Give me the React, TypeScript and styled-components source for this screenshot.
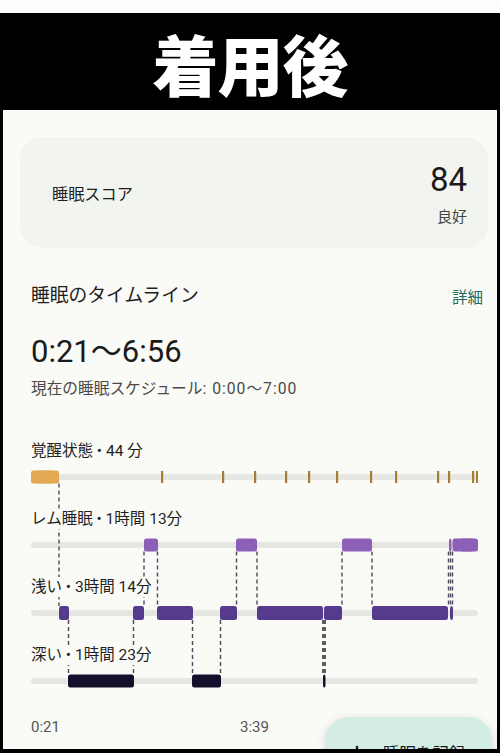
import React from "react";
import styled, { createGlobalStyle } from "styled-components";
import { Plus } from "lucide-react";

const GlobalStyle = createGlobalStyle`
  html, body {
    margin: 0;
    padding: 0;
    background: #fff;
  }

  body {
    width: 500px;
    height: 753px;
    overflow: hidden;
    font-family: Roboto, "Noto Sans CJK JP", sans-serif;
    color: #1f1f1f;
  }
`;

const CHART_W = 447;
const SCREEN_BG = "#fafaf6";

type Bar = [number, number];

interface Stage {
  label: string;
  color: string;
  bars: Bar[];
  ticks?: number[];
  roundLeft?: boolean;
  roundRight?: boolean;
  inset: number;
}

const stages: Stage[] = [
  {
    label: "覚醒状態 • 44 分",
    color: "#e2a954",
    bars: [[0, 28]],
    ticks: [131, 192, 224, 255, 278, 306, 340, 365, 407, 418, 442, 446],
    roundLeft: true,
    inset: 0.5,
  },
  {
    label: "レム睡眠 • 1時間 13分",
    color: "#8b60b6",
    bars: [
      [113, 127],
      [205, 226],
      [311, 341],
      [418, 420.5],
      [421.5, 447],
    ],
    roundRight: true,
    inset: 0.5,
  },
  {
    label: "浅い • 3時間 14分",
    color: "#563a8e",
    bars: [
      [28, 38],
      [102, 113],
      [126, 162],
      [189, 206],
      [226, 292],
      [293, 311],
      [341, 417],
      [419, 422],
    ],
    inset: 0,
  },
  {
    label: "深い • 1時間 23分",
    color: "#160f2c",
    bars: [
      [37, 103],
      [161, 190],
      [292, 294.5],
    ],
    inset: 0.5,
  },
];

// x, y1, y2, dark
const links: [number, number, number, boolean?][] = [
  [28, 42.5, 165],
  [37.5, 179, 233],
  [102.5, 179, 233],
  [113, 110.5, 165],
  [126.5, 110.5, 165],
  [161.5, 179, 233],
  [189.5, 179, 233],
  [205.5, 110.5, 165],
  [226, 110.5, 165],
  [292, 179, 233, true],
  [294, 179, 233, true],
  [311, 110.5, 165],
  [341, 110.5, 165],
  [417.5, 110.5, 165],
  [419.5, 110.5, 165],
  [421.5, 110.5, 165],
];

const Page = styled.div`
  width: 500px;
  height: 753px;
  display: flex;
  flex-direction: column;
`;

const TopStrip = styled.div`
  height: 13px;
  background: #fdfdfd;
`;

const Header = styled.div`
  height: 97px;
  background: #000;
  display: flex;
  align-items: center;
  justify-content: center;
`;

const Title = styled.h1`
  margin: 0;
  color: #fff;
  font-family: "Noto Sans CJK JP", sans-serif;
  font-weight: 900;
  font-size: 66px;
  line-height: 1;
  letter-spacing: -1px;
`;

const Screen = styled.div`
  position: relative;
  flex: 1;
  background: ${SCREEN_BG};
  border: 3px solid #000;
  border-top: 0;
  border-bottom-width: 4px;
  overflow: hidden;
  padding-top: 27px;
`;

const ScoreCard = styled.div`
  height: 111px;
  margin: 0 9px 0 17px;
  border-radius: 22px;
  background: #f2f4f0;
  padding: 0 21px 0 32px;
  display: flex;
  align-items: center;
  justify-content: space-between;
`;

const CardLabel = styled.span`
  font-size: 16.2px;
  color: #1f1f1f;
`;

const ScoreColumn = styled.div`
  display: flex;
  flex-direction: column;
  align-items: flex-end;
  gap: 8px;
  margin-top: 2px;
`;

const ScoreValue = styled.span`
  font-size: 33px;
  line-height: 38px;
  color: #1a1a1a;
`;

const ScoreNote = styled.span`
  font-size: 15px;
  line-height: 20px;
  color: #444;
`;

const Section = styled.section`
  padding: 0 14px 0 28px;
`;

const SectionHead = styled.div`
  margin-top: 36px;
  display: flex;
  align-items: center;
  justify-content: space-between;
`;

const SectionTitle = styled.h2`
  margin: 0;
  font-size: 18.8px;
  line-height: 24px;
  font-weight: 400;
  color: #1f1f1f;
`;

const LinkText = styled.span`
  font-size: 15.5px;
  color: #1f6b5e;
`;

const Range = styled.div`
  margin-top: 25px;
  font-size: 31px;
  line-height: 38px;
  color: #1a1a1a;
`;

const Schedule = styled.div`
  margin-top: 8px;
  font-size: 15.7px;
  line-height: 20px;
  color: #4a4a4a;
`;

const ScheduleTime = styled.span`
  letter-spacing: 1px;
`;

const Chart = styled.div`
  position: relative;
  width: ${CHART_W}px;
  margin-top: 42px;
`;

const StageRow = styled.div`
  display: flex;
  flex-direction: column;
  align-items: flex-start;
  margin-bottom: 25px;
`;

const StageLabel = styled.span`
  position: relative;
  z-index: 1;
  font-size: 15.5px;
  line-height: 20px;
  margin-bottom: 9px;
  background: ${SCREEN_BG};
  color: #1f1f1f;
`;

const TrackSvg = styled.svg`
  display: block;
`;

const Links = styled.svg`
  position: absolute;
  top: 0;
  left: 0;
  z-index: 0;
  pointer-events: none;
`;

const Axis = styled.div`
  margin-top: 29px;
  display: grid;
  grid-template-columns: 1fr auto 1fr;
  font-size: 15px;
  line-height: 20px;
  color: #555;
`;

const Fab = styled.button`
  position: absolute;
  z-index: 2;
  left: 322px;
  top: 607px;
  width: 167px;
  height: 80px;
  border: 0;
  border-radius: 24px;
  background: #d3ece4;
  box-shadow: 0 2px 10px rgba(0, 0, 0, 0.14);
  display: flex;
  align-items: flex-start;
  gap: 14px;
  padding: 27px 0 0 20px;
  font-family: Roboto, "Noto Sans CJK JP", sans-serif;
  font-size: 16.5px;
  line-height: 22px;
  color: #1c1b1f;

  svg {
    margin-top: -2px;
  }
`;

const Track: React.FC<{ stage: Stage }> = ({ stage }) => {
  const h = 14;
  const barH = h - stage.inset * 2;
  const last = stage.bars[stage.bars.length - 1];
  return (
    <TrackSvg width={CHART_W} height={h}>
      <rect x={0} y={4} width={CHART_W} height={6} rx={3} fill="#e6e6e2" />
      {stage.bars.map(([a, b], i) => (
        <rect
          key={i}
          x={a}
          y={stage.inset}
          width={b - a}
          height={barH}
          rx={2.5}
          fill={stage.color}
        />
      ))}
      {stage.roundLeft && (
        <rect x={0} y={stage.inset} width={stage.bars[0][1] - 2} height={barH} rx={barH / 2} fill={stage.color} />
      )}
      {stage.roundRight && (
        <rect x={last[0] + 4} y={stage.inset} width={last[1] - last[0] - 4} height={barH} rx={barH / 2} fill={stage.color} />
      )}
      {stage.ticks?.map((t) => (
        <rect key={t} x={t - 1} y={1} width={2.2} height={12} fill="#a57d35" />
      ))}
    </TrackSvg>
  );
};

const App: React.FC = () => {
  return (
    <>
      <GlobalStyle />
      <Page>
        <TopStrip />
        <Header>
          <Title>着用後</Title>
        </Header>

        <Screen>
          <ScoreCard>
            <CardLabel>睡眠スコア</CardLabel>
            <ScoreColumn>
              <ScoreValue>84</ScoreValue>
              <ScoreNote>良好</ScoreNote>
            </ScoreColumn>
          </ScoreCard>

          <Section>
            <SectionHead>
              <SectionTitle>睡眠のタイムライン</SectionTitle>
              <LinkText>詳細</LinkText>
            </SectionHead>
            <Range>0:21〜6:56</Range>
            <Schedule>
              現在の睡眠スケジュール<ScheduleTime>: 0:00〜7:00</ScheduleTime>
            </Schedule>

            <Chart>
              <Links width={CHART_W} height={250}>
                {links.map(([x, y1, y2, dark], i) => (
                  <line
                    key={i}
                    x1={x}
                    x2={x}
                    y1={y1}
                    y2={y2}
                    stroke={dark ? "#1a1a22" : "#4e4a5e"}
                    strokeWidth={1.4}
                    strokeDasharray="4 3"
                  />
                ))}
              </Links>
              {stages.map((s) => (
                <StageRow key={s.label}>
                  <StageLabel>{s.label}</StageLabel>
                  <Track stage={s} />
                </StageRow>
              ))}
              <Axis>
                <span>0:21</span>
                <span>3:39</span>
              </Axis>
            </Chart>
          </Section>

          <Fab>
            <Plus size={24} strokeWidth={2.4} />
            <span>睡眠を記録</span>
          </Fab>
        </Screen>
      </Page>
    </>
  );
};

export default App;
